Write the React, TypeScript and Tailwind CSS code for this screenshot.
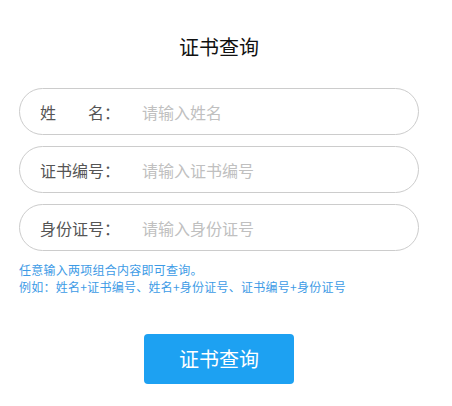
import { useState } from "react";

const font = {
  fontFamily: '"Noto Sans CJK SC", "Noto Sans", sans-serif',
};

function Field({
  label,
  placeholder,
  spread,
}: {
  label: string;
  placeholder: string;
  spread?: boolean;
}) {
  const [value, setValue] = useState("");
  return (
    <div className="flex h-[47px] items-center rounded-full border border-[#cccccc] bg-white pl-5 pr-5">
      {spread ? (
        <div className="flex w-[80px] shrink-0 justify-between text-[16px] leading-5 text-[#555555]">
          <span>姓</span>
          <span>名：</span>
        </div>
      ) : (
        <div className="w-[80px] shrink-0 text-[16px] leading-5 text-[#555555]">{label}</div>
      )}
      <input
        value={value}
        onChange={(e) => setValue(e.target.value)}
        placeholder={placeholder}
        className="ml-[22px] min-w-0 flex-1 bg-transparent text-[16px] leading-5 text-[#333333] outline-none placeholder:text-[#c0c0c0]"
        style={font}
      />
    </div>
  );
}

export default function App() {
  return (
    <div className="min-h-[406px] w-[438px] bg-white" style={font}>
      <div className="mx-auto flex w-[400px] flex-col pt-[33px]">
        <h1 className="text-center text-[20px] font-normal leading-7 text-[#111111]">证书查询</h1>

        <div className="mt-[27px] flex flex-col gap-[11px]">
          <Field label="姓名：" placeholder="请输入姓名" spread />
          <Field label="证书编号：" placeholder="请输入证书编号" />
          <Field label="身份证号：" placeholder="请输入身份证号" />
        </div>

        <div className="mt-[10px] text-[12px] leading-[17px] tracking-[0.25px] text-[#3d9be6]">
          <p>任意输入两项组合内容即可查询。</p>
          <p>例如：姓名+证书编号、姓名+身份证号、证书编号+身份证号</p>
        </div>

        <button className="mx-auto mt-[39px] h-[50px] w-[150px] rounded-[4px] bg-[#1da1f2] text-[20px] text-white">
          证书查询
        </button>
      </div>
    </div>
  );
}
